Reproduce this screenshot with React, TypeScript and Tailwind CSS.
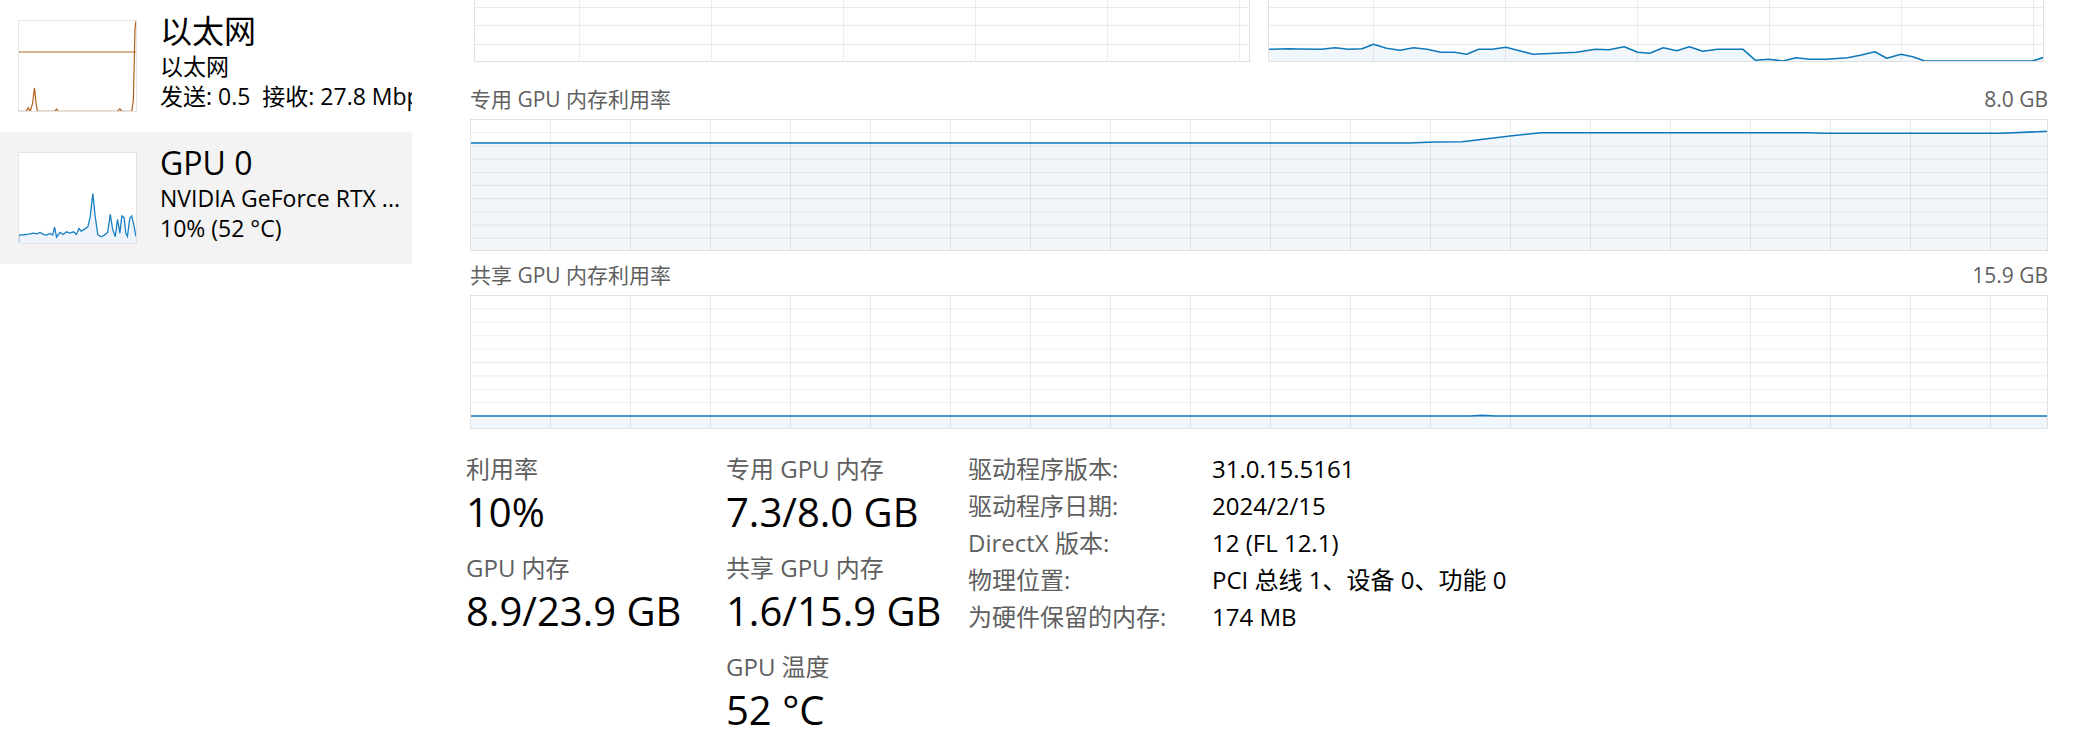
import React from 'react';

type Pt = [number, number];

const toPath = (pts: Pt[]) =>
    pts.map((p, i) => `${i ? 'L' : 'M'}${p[0].toFixed(1)} ${p[1].toFixed(1)}`).join(' ');

// chart with grid, fill and line
const Chart: React.FC<{
    w: number;
    h: number;
    vLines: number[];
    hLines: number[];
    pts?: Pt[];
    cutTop?: boolean;
}> = ({ w, h, vLines, hLines, pts = [], cutTop = false }) => {
    const hasData = pts.length > 0;
    const area = hasData
        ? `${toPath(pts)} L${pts[pts.length - 1][0]} ${h} L${pts[0][0]} ${h} Z`
        : '';
    const line = hasData ? toPath([[pts[0][0], h], ...pts]) : '';
    return (
        <svg width={w} height={h} className="block">
            {hasData && <path d={area} fill="#f1f6fa" />}
            {vLines.map((x) => (
                <line key={'v' + x} x1={x + 0.5} y1={0} x2={x + 0.5} y2={h} stroke="#000" strokeOpacity={0.075} />
            ))}
            {hLines.map((y) => (
                <line key={'h' + y} x1={0} y1={y + 0.5} x2={w} y2={y + 0.5} stroke="#000" strokeOpacity={0.075} />
            ))}
            {hasData && <path d={line} fill="none" stroke="#1079bb" strokeWidth={1.6} strokeLinejoin="round" />}
            <rect
                x={0.5}
                y={cutTop ? -4 : 0.5}
                width={w - 1}
                height={cutTop ? h + 3.5 : h - 1}
                fill="none"
                stroke="#e1e1e1"
            />
        </svg>
    );
};

// top-right chart, points read off the reference
const topRightRaw: Pt[] = [
    [52, 148], [90, 146], [110, 147], [150, 148], [175, 143], [200, 148], [225, 146], [246, 133],
    [270, 145], [295, 151], [320, 143], [345, 148], [370, 157], [395, 157], [418, 163], [440, 148],
    [465, 148], [490, 142], [515, 152], [540, 163], [580, 160], [620, 157], [655, 148], [680, 149],
    [708, 140], [733, 157], [755, 160], [780, 143], [805, 152], [828, 140], [853, 154], [880, 148],
    [927, 148], [950, 181], [975, 178], [1000, 186], [1025, 173], [1050, 178], [1080, 178], [1120, 173],
    [1145, 165], [1170, 155], [1192, 175], [1218, 163], [1240, 170], [1262, 186], [1460, 186], [1482, 172],
];
const topRightPts: Pt[] = topRightRaw.map(([x, y]) => [Math.max(0, 1240 + x / 1.843 - 1268), Math.min(61, y / 3)]);

const dedicatedPts: Pt[] = [
    [0, 24], [938, 24], [965, 23], [992, 22.7], [1040, 17], [1071, 13.7], [1340, 13.7],
    [1352, 14.3], [1530, 14.3], [1578, 12.3],
];
const sharedPts: Pt[] = [
    [0, 121], [1000, 121], [1012, 120.4], [1025, 121], [1578, 121],
];

const range = (n: number, step: number, start = step) =>
    Array.from({ length: n }, (_, i) => Math.round((start + i * step) * 10) / 10);

const ethPath =
    'M55 333 L78 333 L84 322 L90 333 L97 310 L103 262 L108 310 L112 333 L165 333 L170 326 L175 333 L355 333 L362 325 L368 333 L398 333 L403 300 L408 80 L411 60';
const gpuPath =
    'M55 730 L55 708 L70 707 L85 705 L100 702 L110 704 L120 700 L130 706 L140 708 L150 703 L158 708 L164 684 L170 714 L180 700 L190 706 L200 698 L210 702 L222 698 L230 706 L238 688 L245 696 L255 690 L265 683 L272 652 L280 582 L287 650 L295 706 L305 713 L315 708 L325 700 L333 645 L340 690 L348 713 L355 660 L362 702 L368 650 L375 655 L380 702 L385 712 L392 658 L398 650 L405 680 L411 712';

const SideItem: React.FC<{
    selected?: boolean;
    title: string;
    sub1: string;
    sub2: string;
    thumb: React.ReactNode;
}> = ({ selected, title, sub1, sub2, thumb }) => (
    <div className={`h-[132px] flex overflow-hidden ${selected ? 'bg-[#f3f3f3]' : ''}`}>
        <div className="ml-[18px] mt-[20px] w-[119px] h-[92px] shrink-0 bg-white border border-[#e3e3e3]">
            {thumb}
        </div>
        <div className="ml-[23px] pt-[11px] min-w-0 flex-1 text-black">
            <div className="text-[32px] leading-[40px] whitespace-nowrap">{title}</div>
            <div className="text-[23px] leading-[30px] whitespace-pre overflow-hidden">{sub1}</div>
            <div className="text-[23px] leading-[30px] whitespace-pre overflow-hidden">{sub2}</div>
        </div>
    </div>
);

const Stat: React.FC<{ label: string; value: string }> = ({ label, value }) => (
    <div className="mb-[13px]">
        <div className="text-[24px] leading-[34px] text-[#5f5f5f] whitespace-nowrap">{label}</div>
        <div className="text-[40px] leading-[52px] text-black whitespace-nowrap">{value}</div>
    </div>
);

const details: [string, string][] = [
    ['驱动程序版本:', '31.0.15.5161'],
    ['驱动程序日期:', '2024/2/15'],
    ['DirectX 版本:', '12 (FL 12.1)'],
    ['物理位置:', 'PCI 总线 1、设备 0、功能 0'],
    ['为硬件保留的内存:', '174 MB'],
];

export default function App() {
    const topV = [105, 237, 369, 501, 633, 765];
    return (
        <div className="w-[2091px] h-[751px] bg-white flex overflow-hidden font-['Open_Sans','Noto_Sans_CJK_SC',sans-serif]">
            <aside className="w-[412px] shrink-0">
                <SideItem
                    title="以太网"
                    sub1="以太网"
                    sub2="发送: 0.5  接收: 27.8 Mbps"
                    thumb={
                        <svg width="117" height="90" viewBox="56 59 355 273" preserveAspectRatio="none" className="block">
                            <path d="M55 153 L410 153" stroke="#b0621c" strokeWidth={1.2} vectorEffect="non-scaling-stroke" />
                            <path d={ethPath} fill="none" stroke="#b0621c" strokeWidth={1.2} vectorEffect="non-scaling-stroke" />
                        </svg>
                    }
                />
                <SideItem
                    selected
                    title="GPU 0"
                    sub1="NVIDIA GeForce RTX ..."
                    sub2="10% (52 °C)"
                    thumb={
                        <svg width="117" height="90" viewBox="56 459 355 273" preserveAspectRatio="none" className="block">
                            <path d={`${gpuPath} L411 732 L55 732 Z`} fill="#eef4fa" />
                            <path d={gpuPath} fill="none" stroke="#1a80c4" strokeWidth={1.3} vectorEffect="non-scaling-stroke" />
                        </svg>
                    }
                />
            </aside>

            <main className="ml-[58px] w-[1578px] shrink-0 flex flex-col">
                {/* partially scrolled-off charts */}
                <div className="flex gap-[18px] px-[4px] h-[62px]">
                    <Chart w={776} h={62} vLines={topV} hLines={[7, 25, 44]} cutTop />
                    <Chart w={776} h={62} vLines={topV} hLines={[7, 25, 44]} pts={topRightPts} cutTop />
                </div>

                <div className="mt-[23px] h-[30px] flex items-center justify-between text-[21px] text-[#5f5f5f]">
                    <span>专用 GPU 内存利用率</span>
                    <span>8.0 GB</span>
                </div>
                <div className="mt-[4px]">
                    <Chart w={1578} h={132} vLines={range(19, 80)} hLines={range(9, 13.2)} pts={dedicatedPts} />
                </div>

                <div className="mt-[10px] h-[30px] flex items-center justify-between text-[21px] text-[#5f5f5f]">
                    <span>共享 GPU 内存利用率</span>
                    <span>15.9 GB</span>
                </div>
                <div className="mt-[4px]">
                    <Chart w={1578} h={134} vLines={range(19, 80)} hLines={range(9, 13.4)} pts={sharedPts} />
                </div>

                <div className="mt-[23px] -ml-[4px] flex items-start">
                    <div className="w-[260px] shrink-0">
                        <Stat label="利用率" value="10%" />
                        <Stat label="GPU 内存" value="8.9/23.9 GB" />
                    </div>
                    <div className="w-[242px] shrink-0">
                        <Stat label="专用 GPU 内存" value="7.3/8.0 GB" />
                        <Stat label="共享 GPU 内存" value="1.6/15.9 GB" />
                        <Stat label="GPU 温度" value="52 °C" />
                    </div>
                    <div className="-mt-[2px] grid content-start grid-cols-[244px_auto] text-[24px]">
                        {details.map(([k, v]) => (
                            <React.Fragment key={k}>
                                <div className="h-[37px] leading-[37px] text-[#5f5f5f] whitespace-nowrap">{k}</div>
                                <div className="h-[37px] leading-[37px] text-black whitespace-nowrap">{v}</div>
                            </React.Fragment>
                        ))}
                    </div>
                </div>
            </main>
        </div>
    );
}
